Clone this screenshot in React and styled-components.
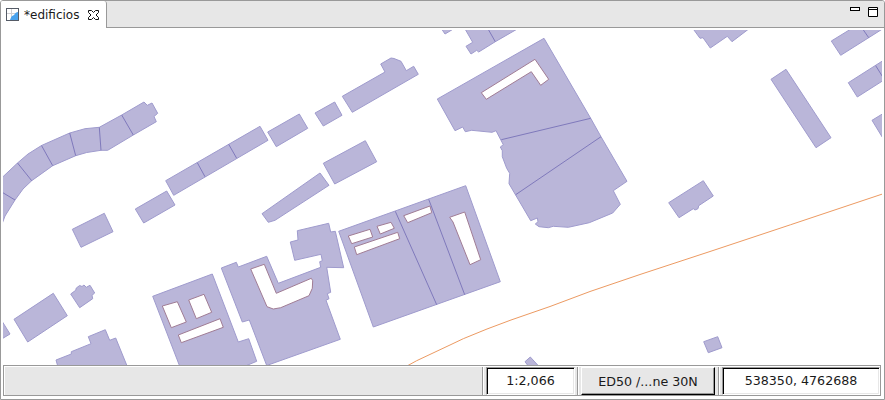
import React from "react";
import styled, { createGlobalStyle } from "styled-components";

const GlobalStyle = createGlobalStyle`
  * { box-sizing: border-box; }
  body { margin: 0; background: #fff; }
`;

const Frame = styled.div`
  width: 885px;
  height: 400px;
  display: flex;
  flex-direction: column;
  overflow: hidden;
  background: #fff;
  border: 1px solid #999;
  border-radius: 3px 3px 0 0;
  font-family: "DejaVu Sans", sans-serif;
  font-size: 12.67px;
  color: #1a1a1a;
`;

const TabBar = styled.header`
  display: flex;
  height: 27px;
  flex: none;
  background: #e7e7e7;
`;

const Tab = styled.div`
  display: flex;
  align-items: center;
  width: 106px;
  padding: 0 0 0 5px;
  background: #fff;
  border-right: 1px solid #999;
  border-top-right-radius: 3px;
`;

const TabTitle = styled.span`
  width: 64px;
  margin-left: 5px;
  font-size: 12px;
  line-height: 16px;
  white-space: nowrap;
`;

const TabActions = styled.div`
  flex: 1;
  display: flex;
  justify-content: flex-end;
  gap: 8px;
  padding: 6px 6px 0 0;
  border-bottom: 1px solid #999;
`;

const Glyph = styled.svg`
  display: block;
  flex: none;
`;

const MapView = styled.main`
  height: 335px;
  margin: 2px 2px 0;
  flex: none;
`;

const MapCanvas = styled.svg`
  display: block;
  width: 879px;
  height: 335px;
`;

const Building = styled.path`
  fill: #bab6d9;
  fill-rule: evenodd;
  stroke: #9f9bcd;
  stroke-width: 1;
`;

const Courtyard = styled.path`
  fill: #fff;
  stroke: #a07c94;
  stroke-width: 1;
`;

const Division = styled.path`
  fill: none;
  stroke: #7f79bb;
  stroke-width: 1;
`;

const Road = styled.path`
  fill: none;
  stroke: #ec9a62;
  stroke-width: 1;
`;

const StatusBar = styled.footer`
  display: flex;
  flex: none;
  width: 878px;
  height: 31px;
  margin-left: 2px;
  padding: 1px 0 0 1px;
  border: 1px solid #999;
  background: #fff;
`;

const Message = styled.div`
  width: 477px;
  height: 28px;
  background: #e7e7e7;
`;

const Divider = styled.div`
  width: 4px;
  height: 28px;
  margin-left: ${(p) => p.$gap || 0}px;
  background: #e7e7e7;
  border-left: 1px solid #999;
  box-shadow: inset 1px 0 #fff, -${(p) => p.$gap || 0}px 0 #e7e7e7;
`;

const Field = styled.div`
  width: ${(p) => p.$width}px;
  height: 28px;
  border: 1px solid;
  border-color: #999 #fff #fff #999;
  background: #fff;
  box-shadow: inset 1px 1px #000, inset -1px -1px #e7e7e7;
  text-align: center;
  line-height: 26px;
  white-space: nowrap;
`;

const ProjectionButton = styled.button`
  width: 134px;
  height: 28px;
  padding: 1px 0 0;
  border: 1px solid;
  border-color: #fff #000 #000 #fff;
  background: #e7e7e7;
  box-shadow: inset -1px -1px #999;
  font: inherit;
  color: inherit;
  white-space: nowrap;
`;

const buildings = [
  "3,176.7 17.5,163 28,154 41.5,145.5 69.7,133 85,128.7 99.3,127.3 121.7,115 144,102 147.3,105.3 152,103 157.7,113.3 154,116.5 156.3,121.7 133.3,135 107.7,150.3 101,150.3 86.7,152.5 75.7,155.7 52.7,165.7 31.7,180.7 23,189 15,200 5,216 2,224 0,224 0,179",
  "72.3,229.3 104.3,213.3 113,231.7 81,247.3",
  "135.3,209 166.7,191 175,205 143.7,223",
  "165.7,180.7 260,126.3 268,140.3 173.7,195.3",
  "267.7,132 299.3,114 307.7,128.3 276.3,146.7",
  "315,113 334.7,102 342,115.3 323.3,126",
  "342.3,96.3 385,72 380.7,64 391,58 394,58.5 401,61.3 406.3,70.7 413.7,66.3 418.3,74.3 352.3,112.3",
  "323.3,163.3 365.3,140.7 376.7,161.7 334.7,184",
  "262,213.7 320,173 329,185.3 275,220.3 268.3,222.3",
  "14,319.3 53.3,293.3 67.3,315.7 27.7,342",
  "0,318 3,322.7 10,334 0,340",
  "70.7,294 75.7,290.3 76.3,288 79.7,285.5 82,286.5 84,285 86.3,287.3 90,285.3 94.7,293 92,295.3 92.7,298.7 79.7,307.7",
  "58,367 56,360 71.3,354 71.3,351.7 91,343.7 88.3,336.7 105.3,329.7 109.7,340.3 115.7,338 127.5,367",
  "152.7,296.3 212.3,274 238.3,342 248.7,338.7 256.7,361.3 243,367 180,367",
  "221.3,268 236.3,262.3 238.3,267 266.7,256.3 278.3,283.3 320.7,267.3 319.7,261.7 322.3,260.7 321,254.3 294.7,260.3 290.3,242 298,240 297.3,230.7 328.7,223.3 330.7,232 335.3,231.3 343.7,267.7 326.7,267.3 330.7,292.3 327.3,293.7 329,298.7 326,300.3 340.3,339.3 266.7,365.5 249.3,320 242.3,322",
  "338.7,231.3 465.7,185.7 500.3,281.7 373.3,327",
  "437.3,99 544,38.3 590.7,118.3 601,136.7 627,181.3 613.3,190.7 620.3,204.3 612.7,213 589.3,222.7 568.3,227.3 553.3,226.3 548.3,227.7 539,226.7 535.3,224 538,221.7 537.3,218 530.7,220.7 509,183.7 509.7,173.3 506.7,168.3 502.3,156.7 502.3,150.7 500.3,147 503.3,144.7 496,130.7 492,132.3 471.7,130.3 465.3,131.7 462.7,127 455,130.7",
  "441,28 445,34 455,28",
  "464.5,28 472.7,42.3 466,46.3 471,54 476.7,50.3 478.7,52 495.3,41.7 519,28",
  "692.5,28 700,38.3 703,37.7 710.3,48 727.3,36.3 732,41.7 750,28",
  "831.3,41 852.5,28 884,28 868.7,37.7 840.7,55.3",
  "848.3,82.7 884,60 884,80 857.3,97",
  "872,120.3 884,113 884,140",
  "771,79.3 786,69.3 831,137.7 816,147.7",
  "668.7,202.7 703.3,180.7 713.3,196 698.7,205.7 698,208.7 695,210 693.3,208.7 679,217.7",
  "525,361.7 530.3,357 539.5,367 529,367",
  "703.7,341.7 717.7,336.7 722,347.7 708.3,352.7",
];

const courtyards = [
  "162.3,306 177.3,301.7 186.3,322 171.3,327.7",
  "188.7,300 204,294.3 211.7,312.3 196.3,318.7",
  "178.3,335 220,318.7 223.3,327.3 181.3,342.7",
  "250.7,269 264.3,264.3 276.3,293.3 311.3,278.3 312.7,280.7 312.3,288.3 309,295.7 280.7,307.7 273.3,309 267,306.7",
  "348.3,236 370,229.3 372.7,237 351.7,243.7",
  "377,226.3 391,222.3 394.3,228.3 380.3,234",
  "354.3,247 397.7,232.3 399.7,238.7 356.7,254.7",
  "403.7,215.7 430,206 431.7,212.7 407.7,222.7",
  "449.7,217.3 464.7,212 480.7,259.7 470,264.7 453,222",
  "481.3,92.7 535,59.3 548.7,79.3 540.7,85.3 531.3,71.7 486.3,99.3",
];

const divisions =
  "M99.3 127.3L101 150.3M69.7 133L75.7 155.7M41.5 145.5L52.7 165.7M17.5 163L31.7 180.7M0 191L15 200M121.7 115L133.3 135" +
  "M197.3 162.7L205 176.7M228.7 144.3L236.7 158.3M395.3 211.3L436.7 304.7M428.7 199.3L464.7 294.7" +
  "M501.3 139.7L590.7 118.3M515.7 194.7L601 136.7M487.5 28L495.3 41.7M862 28L868.7 37.7M875.7 65.7L884 79";

const closed = (points) => `M${points.replace(/ /g, "L")}Z`;

export default function App() {
  return (
    <>
      <GlobalStyle />
      <Frame>
        <TabBar>
          <Tab>
            <Glyph width="13" height="13" viewBox="0 0 13 13">
              <rect x=".5" y=".5" width="12" height="12" fill="#fff" stroke="#555b66" />
              <path d="M5.5 1v11M1 5.5h11" stroke="#d0d0d4" />
              <path d="M12 4C9 4 9 7 7 7.5S5 10 4 12h8z" fill="#4aa3ee" />
            </Glyph>
            <TabTitle>*edificios</TabTitle>
            <Glyph width="11" height="10" viewBox="0 0 11 10">
              <path
                d="M.5.5h3l2 2 2-2h3v2L8 5l2.5 2.5v2h-3l-2-2-2 2h-3v-2L3 5 .5 2.5z"
                fill="#fff"
                stroke="#111"
              />
            </Glyph>
          </Tab>
          <TabActions>
            <Glyph width="10" height="4" viewBox="0 0 10 4">
              <rect x=".5" y=".5" width="9" height="3" fill="#fff" stroke="#000" />
            </Glyph>
            <Glyph width="10" height="10" viewBox="0 0 10 10">
              <path d="M.5.5h9v9h-9zM0 2.5h10" fill="#fff" stroke="#000" />
            </Glyph>
          </TabActions>
        </TabBar>
        <MapView>
          <MapCanvas viewBox="3 30 879 335">
            {buildings.map((b) => (
              <Building key={b} d={closed(b)} />
            ))}
            <Division d={divisions} />
            {courtyards.map((c) => (
              <Courtyard key={c} d={closed(c)} />
            ))}
            <Road d="M407 366L416.7 360.7 450 345 463.3 338.7 487 329 511 320 550 306.5 590 291.5 640 274.5 710 251.5 790.7 224.7 884 193.5" />
          </MapCanvas>
        </MapView>
        <StatusBar>
          <Message />
          <Divider />
          <Field $width={89}>1:2,066</Field>
          <Divider $gap={2} />
          <ProjectionButton>ED50 /...ne 30N</ProjectionButton>
          <Divider $gap={3} />
          <Field $width={158}>538350, 4762688</Field>
        </StatusBar>
      </Frame>
    </>
  );
}
